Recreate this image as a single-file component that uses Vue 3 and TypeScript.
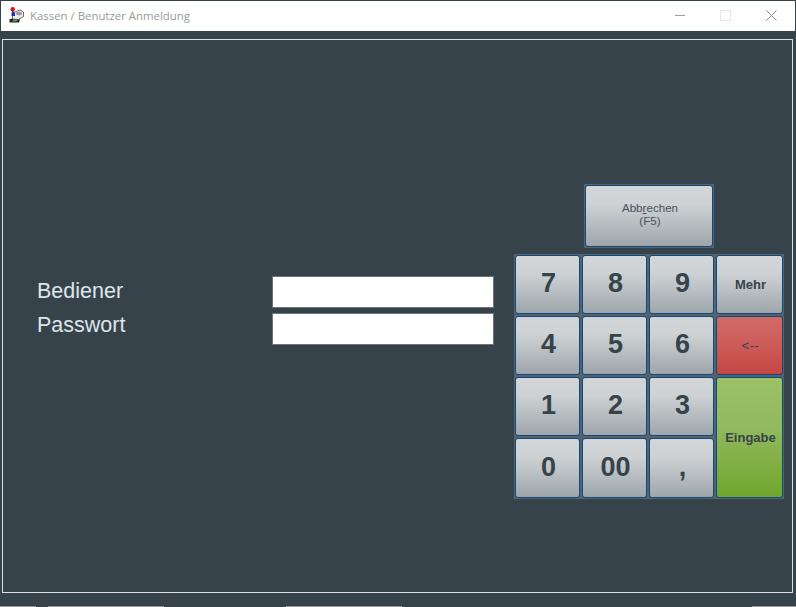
<script setup lang="ts">
interface Key {
  label: string;
  kind?: string;
}

const keys: Key[] = [
  { label: '7' }, { label: '8' }, { label: '9' }, { label: 'Mehr', kind: 'small' },
  { label: '4' }, { label: '5' }, { label: '6' }, { label: '<--', kind: 'small red' },
  { label: '1' }, { label: '2' }, { label: '3' }, { label: 'Eingabe', kind: 'small green' },
  { label: '0' }, { label: '00' }, { label: ',' },
];

const strips = [
  { width: 36, gray: true }, { width: 12, gray: false },
  { width: 116, gray: true }, { width: 122, gray: false },
  { width: 116, gray: true }, { width: 350, gray: false },
  { width: 44, gray: true },
];
</script>

<template>
  <div class="window">
    <div class="titlebar">
      <svg class="app-icon" width="16" height="16" viewBox="0 0 16 16">
        <path d="M0.5 12 L9 11 L11 12.5 L10 15.5 L0.5 15.5 Z" fill="#262626" />
        <path d="M4 12.5 L8.5 12.3 L8 14.3 L3.5 14.5 Z" fill="#5fa03c" />
        <path d="M3.5 6 L11 3 L14.5 5 L14.5 9.5 L9.5 12.5 L3.5 12 Z" fill="#ececec" stroke="#4a4a4a" stroke-width="0.8" />
        <ellipse cx="10" cy="6.5" rx="3" ry="1.8" fill="#9c9c9c" />
        <rect x="3.2" y="3" width="1.4" height="3" fill="#222" />
        <rect x="2.5" y="5.5" width="3.5" height="3.5" fill="#1f2fd0" />
        <circle cx="3.7" cy="2.2" r="2.2" fill="#d8101c" />
      </svg>
      <span class="title">Kassen / Benutzer Anmeldung</span>
      <div class="controls">
        <span class="min"></span>
        <span class="max"></span>
        <svg class="close" width="11" height="11" viewBox="0 0 11 11">
          <path d="M0.5 0.5 L10.5 10.5 M10.5 0.5 L0.5 10.5" stroke="#8a8a8a" stroke-width="1" fill="none" />
        </svg>
      </div>
    </div>

    <div class="panel">
      <div class="form">
        <div class="row">
          <label>Bediener</label>
          <input type="text" />
        </div>
        <div class="row">
          <label>Passwort</label>
          <input type="password" />
        </div>
      </div>

      <div class="right">
        <div class="cancel-wrap">
          <button class="key cancel">Abb<u>r</u>echen<br />(F5)</button>
        </div>
        <div class="keypad">
          <button
            v-for="key in keys"
            :key="key.label"
            class="key"
            :class="key.kind"
          >{{ key.label }}</button>
        </div>
      </div>
    </div>

    <div class="bottom">
      <span
        v-for="(strip, i) in strips"
        :key="i"
        :class="{ gray: strip.gray }"
        :style="{ width: strip.width + 'px' }"
      ></span>
    </div>
  </div>
</template>

<style>
html, body {
  margin: 0;
  background: #37434b;
}
</style>

<style scoped>
.window {
  width: 796px;
  height: 607px;
  box-sizing: border-box;
  display: flex;
  flex-direction: column;
  background: #37434b;
  overflow: hidden;
}

.titlebar {
  height: 30px;
  box-sizing: border-box;
  margin: 1px 1px 0 1px;
  flex: none;
  background: #fff;
  display: flex;
  align-items: center;
  padding: 0 0 2px 8px;
}

.app-icon {
  flex: none;
}

.title {
  margin-left: 5px;
  font-family: "Open Sans", sans-serif;
  font-size: 11.4px;
  color: #9a9a9a;
}

.controls {
  margin-left: auto;
  display: flex;
  align-items: center;
  padding-right: 18px;
}

.min {
  width: 10px;
  height: 1px;
  background: #a0a0a0;
  margin-right: 35px;
}

.max {
  width: 9px;
  height: 9px;
  border: 1px solid #e6e6e6;
  margin-right: 35px;
}

.close {
  display: block;
}

.panel {
  height: 554px;
  margin: 8px 3px 0 2px;
  flex: none;
  box-sizing: border-box;
  border: 1px solid #dde1e4;
  display: flex;
  justify-content: space-between;
  align-items: flex-start;
  padding: 144px 8px 0 34px;
}

.form {
  margin-top: 92px;
  display: flex;
  flex-direction: column;
  gap: 5px;
}

.row {
  display: flex;
  align-items: center;
  height: 32px;
}

.row label {
  width: 235px;
  font-family: "Liberation Sans", sans-serif;
  font-size: 21.5px;
  color: #dfe5ea;
  margin-top: -2px;
}

.row + .row label {
  margin-top: -7px;
}

.row input {
  width: 222px;
  height: 32px;
  box-sizing: border-box;
  border: 1px solid #6f7478;
  background: #fff;
  padding: 0;
  outline: none;
}

.right {
  display: flex;
  flex-direction: column;
  align-items: flex-start;
  gap: 6px;
}

.cancel-wrap {
  margin-left: 70px;
  padding: 1px;
  background: #56636c;
  display: flex;
}

.keypad {
  display: grid;
  grid-template-columns: 65px 65px 65px 67px;
  grid-template-rows: 59px 59px 59px 60px;
  gap: 2px;
  padding: 1px;
  background: #56636c;
}

.key {
  box-sizing: border-box;
  border: 1px solid #0f4a80;
  border-radius: 3px;
  background: linear-gradient(#d2d6d8 0%, #ced2d4 30%, #9ea6ab 100%);
  color: #37434b;
  font-family: "Liberation Sans", sans-serif;
  font-size: 27px;
  font-weight: 700;
  padding: 0 0 2px 2px;
  margin: 0;
}

.key.small {
  font-size: 13px;
  padding: 0 0 0 2px;
}

.key.red {
  background: linear-gradient(#d26a66 0%, #cd5f5b 40%, #c44743 100%);
  font-weight: 400;
  letter-spacing: 0.6px;
}

.key.green {
  grid-row: 3 / span 2;
  grid-column: 4;
  background: linear-gradient(#9cc169 0%, #90b85c 45%, #6fa62b 100%);
}

.key.cancel {
  width: 128px;
  height: 62px;
  font-size: 11.6px;
  font-weight: 400;
  line-height: 13px;
  color: #48525a;
  padding: 0 0 4px 2px;
}

.bottom {
  margin-top: auto;
  height: 1px;
  display: flex;
  flex: none;
}

.bottom span {
  display: block;
  flex: none;
}

.bottom .gray {
  background: #9a9a9a;
}
</style>
